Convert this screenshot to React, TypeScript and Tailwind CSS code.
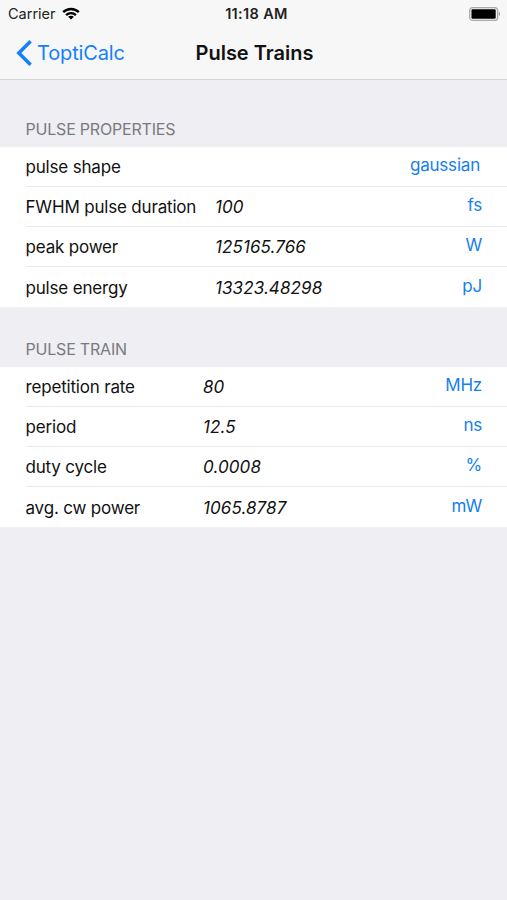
import React from "react";

type Row = { label: string; value?: string; unit: string };

const pulseProperties: Row[] = [
  { label: "pulse shape", unit: "gaussian" },
  { label: "FWHM pulse duration", value: "100", unit: "fs" },
  { label: "peak power", value: "125165.766", unit: "W" },
  { label: "pulse energy", value: "13323.48298", unit: "pJ" },
];

const pulseTrain: Row[] = [
  { label: "repetition rate", value: "80", unit: "MHz" },
  { label: "period", value: "12.5", unit: "ns" },
  { label: "duty cycle", value: "0.0008", unit: "%" },
  { label: "avg. cw power", value: "1065.8787", unit: "mW" },
];

function StatusBar() {
  return (
    <div className="grid h-[27px] grid-cols-3 items-center pl-2 pr-[6px] text-[14.5px] text-[#222]">
      <div className="flex items-center gap-[6px]">
        <span>Carrier</span>
        <svg width="18" height="13" viewBox="0 0 18 13" fill="none" stroke="#000" strokeWidth="2.4" aria-hidden>
          <path d="M1.2 5.2C5.6 .9 12.4 .9 16.8 5.2" />
          <path d="M4.1 8.1C6.9 5.5 11.1 5.5 13.9 8.1" />
          <path d="M9 12.6L6.1 9.8C7.8 8.3 10.2 8.3 11.9 9.8Z" fill="#000" stroke="none" />
        </svg>
      </div>
      <div className="whitespace-nowrap pl-1 text-center text-[14.5px] font-semibold tracking-[0.35px]">11:18 AM</div>
      <svg className="justify-self-end" width="32" height="14" viewBox="0 0 32 14" aria-hidden>
        <rect x=".7" y=".6" width="28" height="12.8" rx="3.2" fill="#f0f0f0" stroke="#aaa" strokeWidth="1.3" />
        <rect x="2.5" y="2.3" width="24.2" height="9.4" rx="1.2" fill="#000" />
        <path d="M29.9 4.8C31.3 5.6 31.3 8.4 29.9 9.2Z" fill="#888" />
      </svg>
    </div>
  );
}

function NavBar() {
  return (
    <div className="grid h-[52px] grid-cols-[1fr_auto_1fr] items-center pl-4 pr-[14px]">
      <button className="flex items-center gap-[5px] text-[20px] tracking-[-0.15px] text-[#1480fb]">
        <svg width="16" height="26" viewBox="0 0 16 26" fill="none" stroke="currentColor" strokeWidth="3.5" aria-hidden>
          <path d="M14.6 1.2L2.8 13L14.6 24.8" />
        </svg>
        <span>ToptiCalc</span>
      </button>
      <h1 className="text-[20px] font-semibold text-[#111]">Pulse Trains</h1>
    </div>
  );
}

function Section({ title, rows, labelClass }: { title: string; rows: Row[]; labelClass: string }) {
  return (
    <section>
      <h2 className="flex h-[60px] items-end pb-[6px] pl-[25.5px] text-[16px] tracking-[-0.2px] text-[#7a7a80]">
        {title}
      </h2>
      <ul className="bg-white pl-[25.5px]">
        {rows.map((row) => (
          <li
            key={row.label}
            className="flex h-10 items-center border-b border-[#ebebed] text-[17px] text-[#111] last:border-b-0"
          >
            <span className={`pt-[3px] tracking-[-0.18px] ${labelClass}`}>{row.label}</span>
            <span className="flex-1 pt-[3px] italic tracking-[0.1px]">{row.value}</span>
            <span className={`pb-[1px] tracking-[-0.2px] text-[#1480f0] ${row.value ? "pr-[25px]" : "pr-[27px]"}`}>
              {row.unit}
            </span>
          </li>
        ))}
      </ul>
    </section>
  );
}

export default function App() {
  return (
    <div className="min-h-screen bg-[#eeeef3] font-['Inter',sans-serif]">
      <header className="h-20 border-b border-[#d5d5d8] bg-[#f7f7f8]">
        <StatusBar />
        <NavBar />
      </header>
      <main className="pt-[7px]">
        <Section title="PULSE PROPERTIES" rows={pulseProperties} labelClass="w-[189.5px]" />
        <Section title="PULSE TRAIN" rows={pulseTrain} labelClass="w-[177.5px]" />
      </main>
    </div>
  );
}
